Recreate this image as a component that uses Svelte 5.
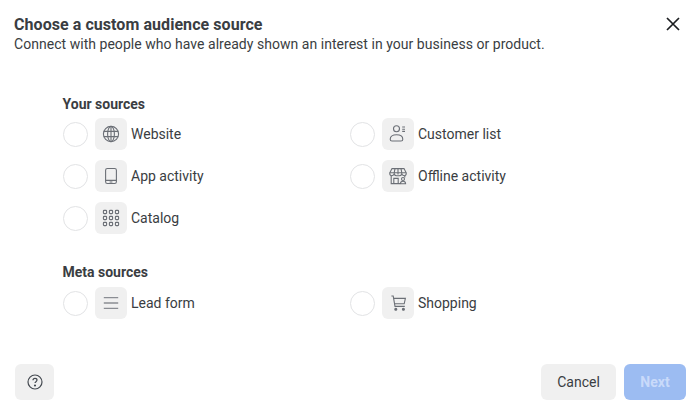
<script>
	const yourSources = [
		{ label: "Website", icon: "globe" },
		{ label: "Customer list", icon: "customer" },
		{ label: "App activity", icon: "phone" },
		{ label: "Offline activity", icon: "store" },
		{ label: "Catalog", icon: "grid" }
	];
	const metaSources = [
		{ label: "Lead form", icon: "lines" },
		{ label: "Shopping", icon: "cart" }
	];
	const dots = [0, 1, 2].flatMap((r) => [0, 1, 2].map((c) => ({ x: 4 + c * 6, y: 4 + r * 6 })));
</script>

{#snippet sourceIcon(name)}
	<svg viewBox="0 0 20 20" width="20" height="20" fill="none" stroke="#6b6f76" stroke-width="1.1">
		{#if name === "globe"}
			<circle cx="10" cy="10" r="7.6" />
			<ellipse cx="10" cy="10" rx="3.4" ry="7.6" />
			<path d="M2.8 7.4h14.4M2.8 12.6h14.4M10 2.4v15.2" />
		{:else if name === "phone"}
			<rect x="4.600" y="2.500" width="10.800" height="15" rx="1.800" />
			<path d="M4.600 14.400h10.800M8.600 16h2.800" />
		{:else if name === "grid"}
			{#each dots as d}
				<rect x={d.x - 1.6} y={d.y - 1.6} width="3.2" height="3.2" rx="0.8" />
			{/each}
		{:else if name === "customer"}
			<circle cx="8.500" cy="4.800" r="3" />
			<path d="M2.200 15.200c0-3 2.600-4.400 6.300-4.400s6.300 1.400 6.300 4.400c0 1.200-.8 1.800-1.800 1.800H4c-1 0-1.800-.6-1.800-1.800z" />
			<path d="M14.200 3h2.800M14.200 5.200h2.800M14.200 7.400h2.800" />
		{:else if name === "store"}
			<path d="M4 2.600h12l2.200 4.200v1c0 1.100-1 1.900-2 1.900s-1.800-.6-2.400-1.300c-.5.700-1.400 1.300-2.400 1.300H8.600c-1 0-1.900-.6-2.400-1.300-.6.700-1.400 1.300-2.400 1.300s-2-.8-2-1.900v-1z" />
			<path d="M1.800 6.800h16.400M7 2.600l-.8 4.200v1.600M13 2.600l.8 4.200v1.600M10 2.600v6" />
			<path d="M3.200 9.800v7.800h9M16.800 9.800v1.600" />
			<path d="M5.800 17.600v-5.200h4.400v5.200" />
			<circle cx="15" cy="13" r="1.500" />
			<path d="M12.400 17.800c0-1.600 1.100-2.600 2.600-2.600s2.600 1 2.600 2.600z" />
		{:else if name === "lines"}
			<path d="M2.800 4.600h14.400M2.800 10h14.400M2.800 15.400h14.400" stroke="#8a8d93" stroke-width="1.300" />
		{:else if name === "cart"}
			<path d="M3.400 3h1.800l1.800 10.400h9.800" />
			<path d="M5.600 5.400h11.800l-1.200 5.400H6.600" />
			<circle cx="7.800" cy="16.200" r="1" fill="#6b6f76" />
			<circle cx="15.400" cy="16.200" r="1" fill="#6b6f76" />
		{/if}
	</svg>
{/snippet}

{#snippet option(item)}
	<div class="option">
		<span class="radio"></span>
		<span class="tile">{@render sourceIcon(item.icon)}</span>
		<span class="label">{item.label}</span>
	</div>
{/snippet}

<section class="dialog">
	<header>
		<div>
			<h1>Choose a custom audience source</h1>
			<p>Connect with people who have already shown an interest in your business or product.</p>
		</div>
		<button class="close" aria-label="Close">
			<svg viewBox="0 0 14 14" width="14" height="14" fill="none" stroke="#1c1e21" stroke-width="1.700">
				<path d="M1 1l12 12M13 1L1 13" />
			</svg>
		</button>
	</header>

	<main>
		<h2>Your sources</h2>
		<div class="options">
			{#each yourSources as item}
				{@render option(item)}
			{/each}
		</div>

		<h2 class="meta">Meta sources</h2>
		<div class="options">
			{#each metaSources as item}
				{@render option(item)}
			{/each}
		</div>
	</main>

	<footer>
		<button class="btn help" aria-label="Help">
			<svg viewBox="0 0 16 16" width="16" height="16" fill="none" stroke="#444950" stroke-width="1.200">
				<circle cx="8" cy="8" r="7" />
				<path d="M6 6.300c0-1.200.9-1.900 2-1.900s2 .7 2 1.700c0 1.600-2 1.500-2 3" />
				<circle cx="8" cy="11.500" r=".5" fill="#444950" />
			</svg>
		</button>
		<div class="actions">
			<button class="btn cancel">Cancel</button>
			<button class="btn next" disabled>Next</button>
		</div>
	</footer>
</section>

<style>
	:global(body) {
		background: #fff;
	}

	.dialog {
		width: 700px;
		height: 412px;
		display: flex;
		flex-direction: column;
		font-family: Roboto, "Liberation Sans", sans-serif;
		color: #444950;
		overflow: hidden;
	}

	header {
		display: flex;
		justify-content: space-between;
		padding: 15px 20px 0 14px;
	}

	h1 {
		margin: 0;
		font-size: 16px;
		line-height: 20px;
		font-weight: 700;
		letter-spacing: 0.06px;
		color: #3a3d42;
	}

	header p {
		margin: 0;
		font-size: 14px;
		line-height: 19px;
		letter-spacing: 0.035px;
		color: #3a3d42;
	}

	.close {
		padding: 0;
		margin-top: 2px;
		width: 14px;
		height: 14px;
		border: none;
		background: none;
	}

	main {
		flex: 1;
		padding: 41px 0 0 62.5px;
	}

	h2 {
		margin: 0 0 5px;
		font-size: 14px;
		line-height: 18px;
		font-weight: 700;
		color: #3a3d42;
	}

	h2.meta {
		margin: 29px 0 6px;
	}

	.options {
		display: grid;
		grid-template-columns: 287px 287px;
		row-gap: 10px;
	}

	.option {
		display: flex;
		align-items: center;
		height: 32px;
	}

	.radio {
		width: 25px;
		height: 25px;
		box-sizing: border-box;
		border: 1.5px solid #e2e3e5;
		border-radius: 50%;
		margin-right: 7.5px;
	}

	.tile {
		width: 32px;
		height: 32px;
		border-radius: 6px;
		background: #f0f0f0;
		display: flex;
		align-items: center;
		justify-content: center;
		margin-right: 4px;
	}

	.label {
		font-size: 14px;
		color: #3a3d42;
	}

	footer {
		display: flex;
		justify-content: space-between;
		padding: 0 14px 12px 15px;
	}

	.actions {
		display: flex;
		gap: 8px;
	}

	.btn {
		height: 36px;
		border: none;
		border-radius: 6px;
		font-family: inherit;
		font-size: 14px;
		padding: 0;
		background: #f0f0f0;
		color: #3a3d42;
	}

	.help {
		width: 39px;
		display: flex;
		align-items: center;
		justify-content: center;
	}

	.cancel {
		width: 75px;
	}

	.next {
		width: 62px;
		background: #9cbcf2;
		color: #c9dafa;
		font-weight: 700;
	}
</style>
